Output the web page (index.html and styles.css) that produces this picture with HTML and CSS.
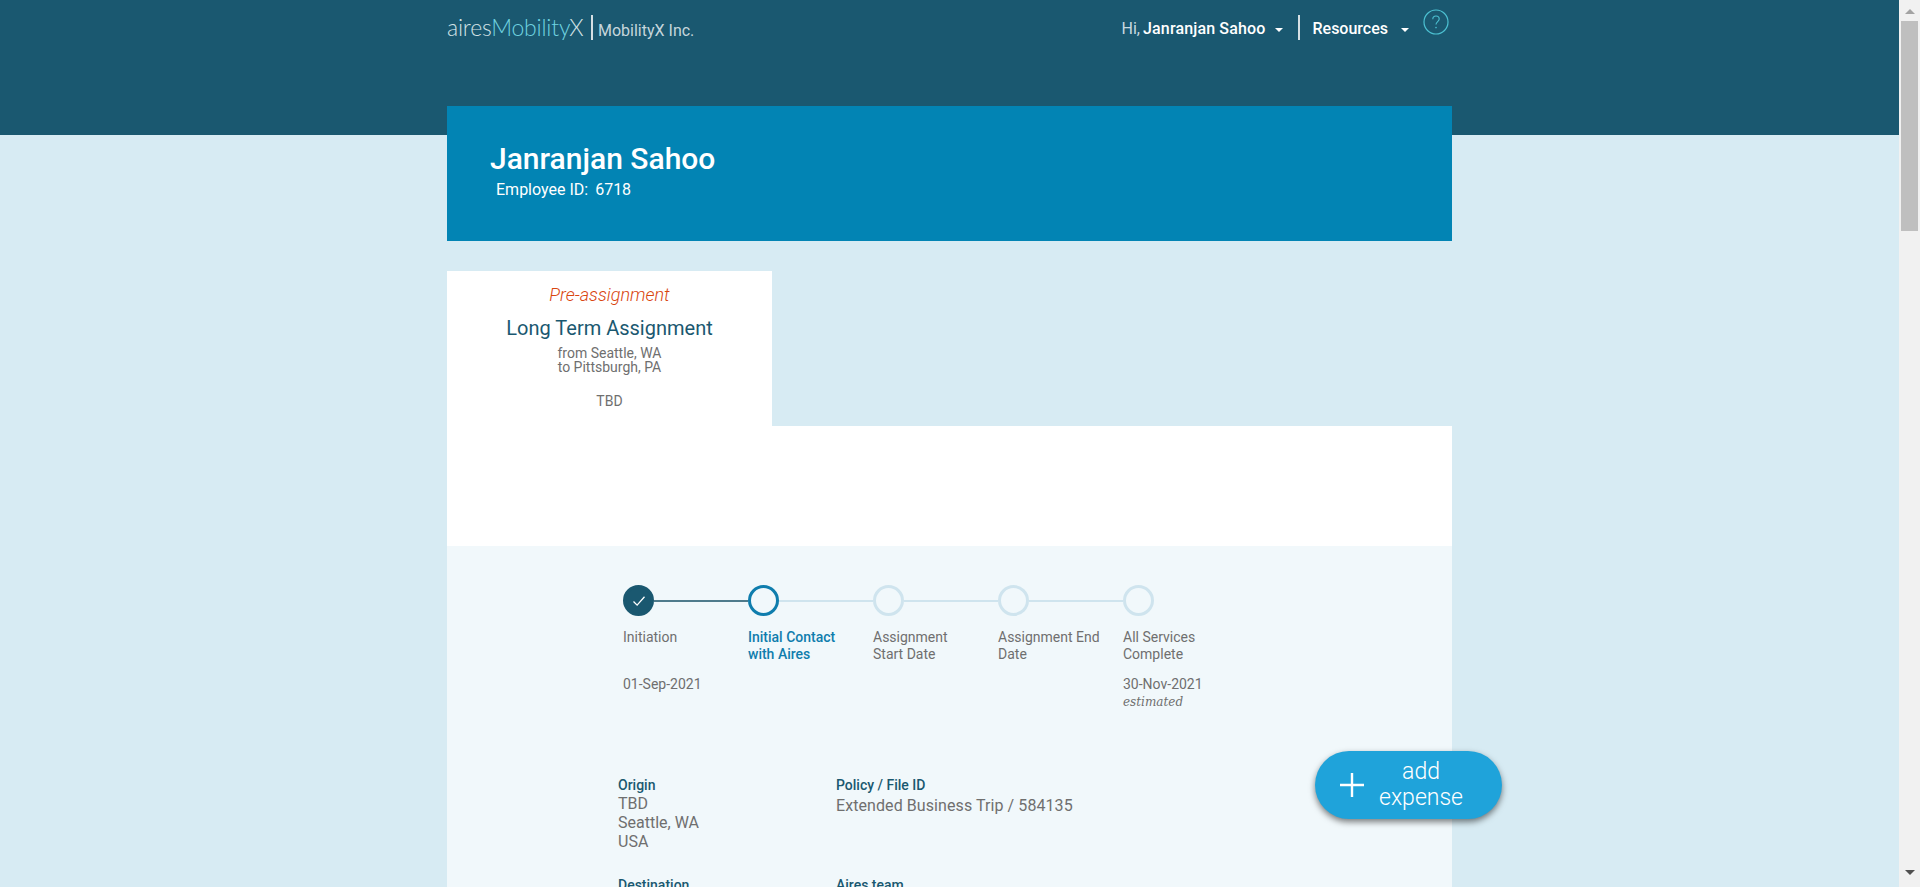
FILE: index.html
```html
<!DOCTYPE html>
<html lang="en">
<head>
    <meta charset="UTF-8">
    <title>MobilityX</title>
    <link rel="stylesheet" href="styles.css">
</head>
<body>
    <div class="page">
        <header class="top-band">
            <div class="top-bar">
                <div class="brand">
                    <span class="logo">aires<span class="logo-accent">Mobility</span>X</span>
                    <span class="divider"></span>
                    <span class="company">MobilityX Inc.</span>
                </div>
                <nav class="top-nav">
                    <span class="hi">Hi,</span>
                    <span class="nav-link user-link">Janranjan Sahoo</span>
                    <span class="caret caret-user"></span>
                    <span class="divider nav-divider"></span>
                    <span class="nav-link">Resources</span>
                    <span class="caret caret-res"></span>
                    <svg class="help" width="26" height="26" viewBox="0 0 26 26" fill="none">
                        <circle cx="13" cy="13" r="12" stroke="#4cc1d2" stroke-width="1.2"/>
                        <path d="M9.8 10.2c0-1.9 1.4-3.2 3.2-3.2s3.2 1.2 3.2 3c0 2.6-3.2 2.7-3.2 5.6" stroke="#4cc1d2" stroke-width="1.1"/>
                        <circle cx="13" cy="18.6" r="0.8" fill="#4cc1d2"/>
                    </svg>
                </nav>
            </div>
        </header>

        <main class="wrap">
            <section class="hero">
                <h1>Janranjan Sahoo</h1>
                <div class="emp-id"><span>Employee ID:</span><span>6718</span></div>
            </section>

            <section class="assignment-card">
                <div class="status">Pre-assignment</div>
                <div class="assignment-type">Long Term Assignment</div>
                <div class="route">from Seattle, WA<br>to Pittsburgh, PA</div>
                <div class="assignment-tbd">TBD</div>
            </section>

            <div class="white-panel"></div>

            <section class="details">
                <div class="stepper">
                    <div class="step done">
                        <div class="step-head">
                            <span class="dot">
                                <svg width="14" height="12" viewBox="0 0 14 12" fill="none">
                                    <path d="M1.5 6.5l3.6 3.6L12.5 1.8" stroke="#fff" stroke-width="1.3"/>
                                </svg>
                            </span>
                            <span class="line"></span>
                        </div>
                        <div class="step-label">Initiation</div>
                        <div class="step-date">01-Sep-2021</div>
                    </div>
                    <div class="step current">
                        <div class="step-head"><span class="dot"></span><span class="line"></span></div>
                        <div class="step-label">Initial Contact with Aires</div>
                    </div>
                    <div class="step">
                        <div class="step-head"><span class="dot"></span><span class="line"></span></div>
                        <div class="step-label">Assignment Start Date</div>
                    </div>
                    <div class="step">
                        <div class="step-head"><span class="dot"></span><span class="line"></span></div>
                        <div class="step-label">Assignment End Date</div>
                    </div>
                    <div class="step">
                        <div class="step-head"><span class="dot"></span></div>
                        <div class="step-label">All Services Complete</div>
                        <div class="step-date">30-Nov-2021</div>
                        <div class="step-note">estimated</div>
                    </div>
                </div>

                <div class="info-grid">
                    <div class="info">
                        <div class="info-title">Origin</div>
                        <div class="info-value">TBD<br>Seattle, WA<br>USA</div>
                    </div>
                    <div class="info">
                        <div class="info-title">Policy / File ID</div>
                        <div class="info-value policy">Extended Business Trip / 584135</div>
                    </div>
                    <div class="info">
                        <div class="info-title">Destination</div>
                    </div>
                    <div class="info">
                        <div class="info-title">Aires team</div>
                    </div>
                </div>
            </section>
        </main>

        <button class="add-expense">
            <svg width="24" height="24" viewBox="0 0 24 24" fill="none">
                <path d="M12 0v24M0 12h24" stroke="#fff" stroke-width="2.4"/>
            </svg>
            <span>add<br>expense</span>
        </button>
    </div>

    <div class="scrollbar">
        <span class="arrow arrow-up"></span>
        <span class="thumb"></span>
        <span class="arrow arrow-down"></span>
    </div>
</body>
</html>
```

FILE: styles.css
```css
/* Base */
html, body {
    height: 100%;
}

body {
    margin: 0;
    display: flex;
    overflow: hidden;
    background-color: #d7ebf3;
    font-family: Roboto, "Liberation Sans", sans-serif;
    color: #6f6f6f;
}

.page {
    flex: 1;
    min-width: 0;
    height: 100vh;
    overflow: hidden;
    position: relative;
}

/* Header */
.top-band {
    height: 135px;
    background-color: #1a5870;
}

.top-bar {
    width: 1005px;
    margin: 0 auto;
    padding-top: 15px;
    display: flex;
    justify-content: space-between;
    align-items: flex-start;
}

.brand {
    display: flex;
    align-items: flex-start;
}

.logo {
    width: 144px;
    font-family: Lato, sans-serif;
    font-weight: 300;
    font-size: 23px;
    line-height: 25px;
    letter-spacing: -0.2px;
    color: #d3e2e6;
}

.logo-accent {
    color: #6fd3e0;
}

.divider {
    width: 2px;
    height: 25px;
    background-color: #d5dfe3;
}

.company {
    margin: 6px 0 0 5px;
    font-size: 16px;
    line-height: 19px;
    color: #c6d6dc;
}

.top-nav {
    display: flex;
    align-items: flex-start;
    padding-right: 3px;
    color: #fff;
}

.hi {
    margin: 5px 3px 0 0;
    font-size: 16px;
    line-height: 18px;
    color: #c9dae0;
}

.nav-link {
    margin-top: 5px;
    font-size: 16px;
    line-height: 18px;
    font-weight: 500;
}

.user-link {
    letter-spacing: 0.15px;
}

.caret {
    width: 0;
    height: 0;
    margin-top: 13px;
    border-left: 4px solid transparent;
    border-right: 4px solid transparent;
    border-top: 4px solid #fff;
}

.caret-user {
    margin-left: 10px;
    margin-right: 15px;
}

.nav-divider {
    margin-right: 12px;
}

.caret-res {
    margin-left: 13px;
    margin-right: 14px;
}

.help {
    margin-top: -6px;
}

/* Main column */
.wrap {
    width: 1005px;
    margin: -29px auto 0;
}

.hero {
    height: 135px;
    box-sizing: border-box;
    padding: 36px 43px 0;
    background-color: #0284b4;
    color: #fff;
}

h1 {
    margin: 0;
    font-size: 30px;
    line-height: 33px;
    font-weight: 500;
}

.emp-id {
    margin: 5px 0 0 6px;
    display: flex;
    gap: 7px;
    font-size: 16px;
    line-height: 19px;
}

.assignment-card {
    width: 325px;
    height: 155px;
    box-sizing: border-box;
    margin-top: 30px;
    padding-top: 14px;
    background-color: #fff;
    text-align: center;
    font-size: 14px;
}

.status {
    font-size: 18px;
    line-height: 20px;
    font-weight: 300;
    font-style: italic;
    color: #d9460f;
}

.assignment-type {
    margin-top: 10px;
    font-size: 20px;
    line-height: 26px;
    color: #1a5870;
}

.route {
    margin-top: 5px;
    line-height: 14px;
}

.assignment-tbd {
    margin-top: 19px;
    line-height: 16px;
}

.white-panel {
    height: 120px;
    background-color: #fff;
}

/* Stepper and details */
.details {
    padding: 39px 0 60px 176px;
    background-color: #f1f8fb;
}

.stepper {
    display: flex;
    font-size: 14px;
    line-height: 17px;
}

.step {
    width: 125px;
}

.step-head {
    display: flex;
    align-items: center;
    height: 31px;
    margin-bottom: 13px;
}

.dot {
    flex: none;
    width: 31px;
    height: 31px;
    box-sizing: border-box;
    border: 3px solid #cfe4ee;
    border-radius: 50%;
}

.line {
    flex: 1;
    height: 2px;
    margin-top: 1px;
    background-color: #cfe4ee;
}

.done .dot {
    display: flex;
    align-items: center;
    justify-content: center;
    background-color: #1a5870;
    border-color: #1a5870;
}

.done .line {
    background-color: #4f7b8c;
}

.current .dot {
    border-color: #0f7dad;
}

.current .step-label {
    color: #0f7dad;
    font-weight: 500;
}

.step-label {
    height: 34px;
    padding-right: 21px;
}

.step-date {
    margin-top: 13px;
}

.step-note {
    margin-top: 1px;
    font-family: "DejaVu Serif", serif;
    font-style: italic;
    font-size: 12px;
}

.info-grid {
    display: grid;
    grid-template-columns: 218px 1fr;
    row-gap: 26px;
    margin: 66px 0 0 -5px;
}

.info-title {
    font-size: 14px;
    line-height: 17px;
    font-weight: 500;
    color: #1a5870;
}

.info-value {
    font-size: 16px;
    line-height: 19px;
}

.policy {
    margin-top: 2px;
    letter-spacing: 0.08px;
}

/* Floating button */
.add-expense {
    position: absolute;
    left: 1315px;
    top: 751px;
    width: 187px;
    height: 68px;
    padding: 0 0 0 25px;
    display: flex;
    align-items: center;
    gap: 12px;
    border: none;
    border-radius: 34px;
    background-color: #1fa3da;
    box-shadow: 0 3px 6px rgba(0, 0, 0, 0.5);
    color: #fff;
    font-family: Roboto, sans-serif;
    font-size: 23px;
    line-height: 26px;
    font-weight: 300;
}

.add-expense span {
    width: 90px;
    text-align: center;
}

/* Scrollbar */
.scrollbar {
    flex: none;
    width: 21px;
    height: 100vh;
    box-sizing: border-box;
    padding: 9px 2px;
    display: flex;
    flex-direction: column;
    align-items: center;
    background-color: #f1f1f1;
}

.thumb {
    width: 17px;
    height: 210px;
    margin-top: 7px;
    background-color: #bfbfbf;
}

.arrow {
    width: 0;
    height: 0;
    border-left: 5px solid transparent;
    border-right: 5px solid transparent;
}

.arrow-up {
    border-bottom: 5px solid #a3a3a3;
}

.arrow-down {
    margin-top: auto;
    margin-bottom: 3px;
    border-top: 5px solid #505050;
}
```
